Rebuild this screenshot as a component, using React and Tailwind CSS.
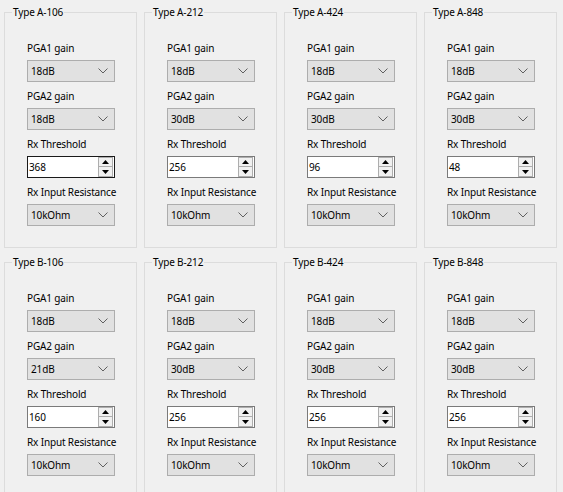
import React from "react";

const groups = [
  { t: "Type A-106", p1: "18dB", p2: "18dB", th: "368", focus: true },
  { t: "Type A-212", p1: "18dB", p2: "30dB", th: "256" },
  { t: "Type A-424", p1: "18dB", p2: "30dB", th: "96" },
  { t: "Type A-848", p1: "18dB", p2: "30dB", th: "48" },
  { t: "Type B-106", p1: "18dB", p2: "21dB", th: "160" },
  { t: "Type B-212", p1: "18dB", p2: "30dB", th: "256" },
  { t: "Type B-424", p1: "18dB", p2: "30dB", th: "256" },
  { t: "Type B-848", p1: "18dB", p2: "30dB", th: "256" },
];

function Combo({ value }) {
  return (
    <div className="mt-[4px] mb-[6px] flex h-[22px] w-[88px] items-center justify-between border border-[#adadad] bg-[#e1e1e1] pl-[3px] pr-[6px]">
      <span className="leading-[16px]">{value}</span>
      <svg width="10" height="6" viewBox="0 0 10 6" className="block">
        <path d="M0.5 0.5 L5 5 L9.5 0.5" fill="none" stroke="#606060" strokeWidth="1" />
      </svg>
    </div>
  );
}

function Spin({ value, focus }) {
  return (
    <div
      className={
        "mt-[4px] mb-[6px] flex h-[22px] w-[88px] items-center justify-between bg-white pl-[1px] pr-[1px] border " +
        (focus ? "border-[#1a1a1a]" : "border-[#7a7a7a]")
      }
    >
      <span className="leading-[16px]">{value}</span>
      <div className="flex h-[20px] w-[15px] flex-col">
        <div className="flex h-[10px] items-center justify-center border border-[#adadad] bg-[#f0f0f0]">
          <svg width="7" height="4" viewBox="0 0 7 4" className="block">
            <path d="M0 4 L3.5 0 L7 4 Z" fill="#000" />
          </svg>
        </div>
        <div className="flex h-[10px] items-center justify-center border border-t-0 border-[#adadad] bg-[#f0f0f0]">
          <svg width="7" height="4" viewBox="0 0 7 4" className="block">
            <path d="M0 0 L3.5 4 L7 0 Z" fill="#000" />
          </svg>
        </div>
      </div>
    </div>
  );
}

function Label({ children }) {
  return <div className="h-[16px] leading-[16px] whitespace-nowrap">{children}</div>;
}

function Group({ g }) {
  return (
    <div className="relative h-[236px] border border-[#dcdcdc] pl-[22px] pt-[27px]">
      <div className="absolute -top-[9px] left-[7px] bg-[#f0f0f0] px-[1px] leading-[16px] whitespace-nowrap">
        {g.t}
      </div>
      <Label>PGA1 gain</Label>
      <Combo value={g.p1} />
      <Label>PGA2 gain</Label>
      <Combo value={g.p2} />
      <Label>Rx Threshold</Label>
      <Spin value={g.th} focus={g.focus} />
      <Label>Rx Input Resistance</Label>
      <Combo value="10kOhm" />
    </div>
  );
}

export default function App() {
  return (
    <div className="h-[492px] w-[563px] overflow-hidden bg-[#f0f0f0] pl-[4px] pt-[12px] font-['Noto_Sans',sans-serif] text-[10px] tracking-[-0.15px] text-black">
      <div className="grid grid-cols-[repeat(4,133px)] gap-x-[7px] gap-y-[14px]">
        {groups.map((g) => (
          <Group key={g.t} g={g} />
        ))}
      </div>
    </div>
  );
}
